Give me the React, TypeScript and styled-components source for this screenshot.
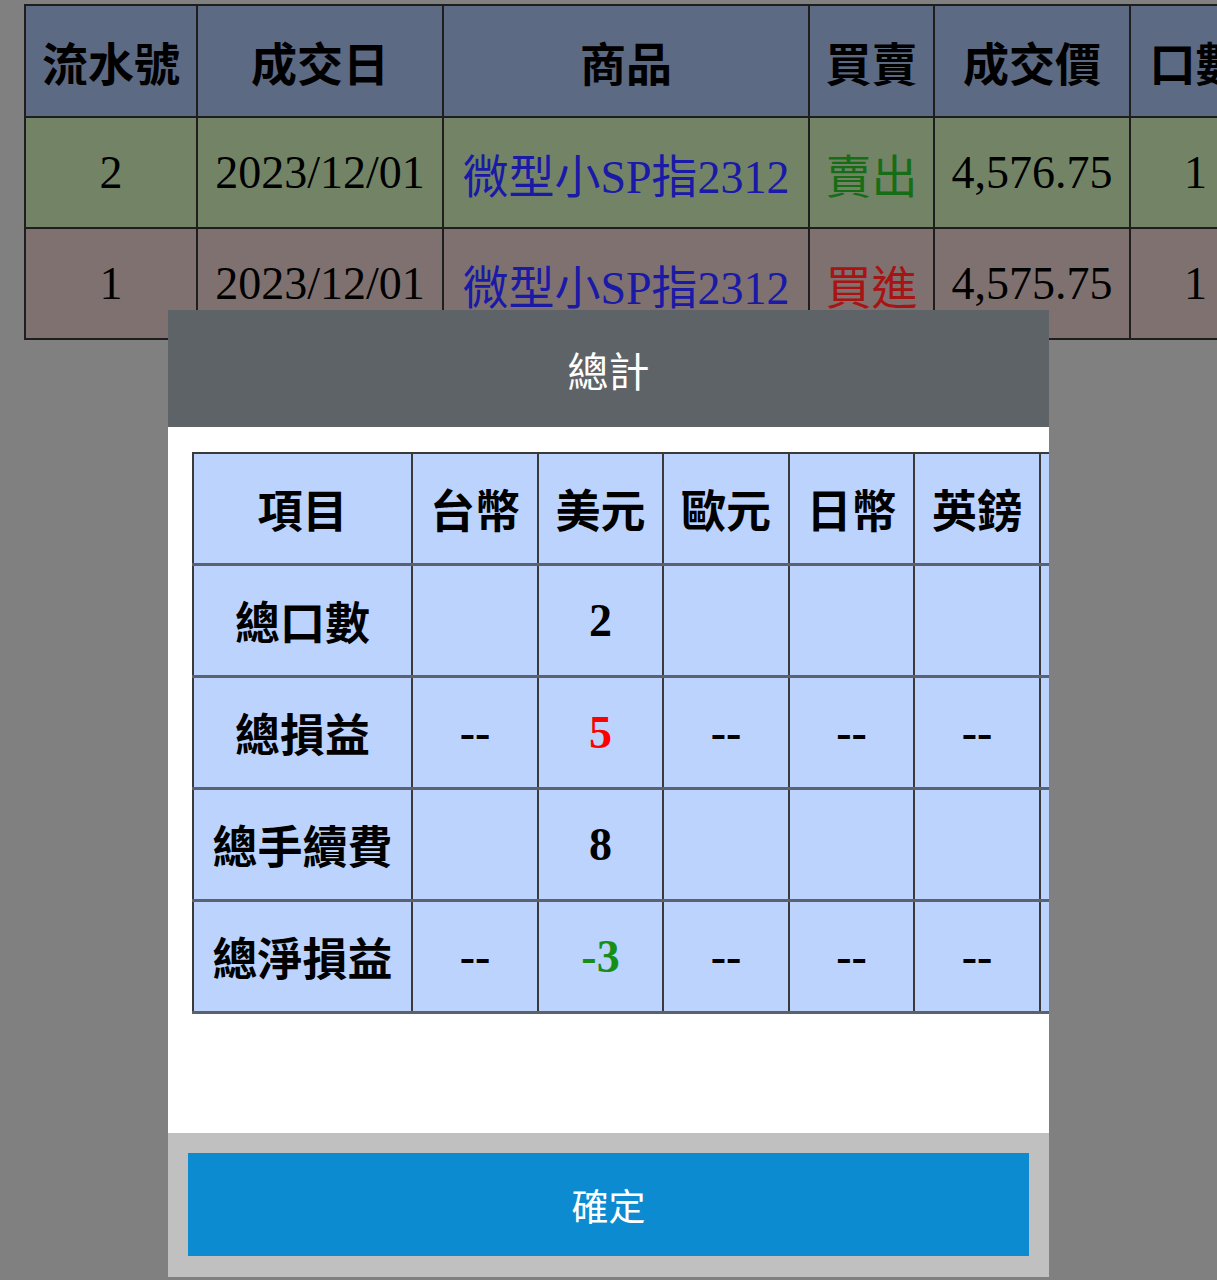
import React from 'react';
import styled, { createGlobalStyle } from 'styled-components';

const GlobalStyle = createGlobalStyle`
  html, body {
    margin: 0;
    padding: 0;
    overflow: hidden;
    background: #c5c5c5;
  }
`;

const SANS = `"Noto Sans CJK TC", "Noto Sans", sans-serif`;
const SERIF = `"Liberation Serif", "Noto Sans CJK TC", serif`;

const Page = styled.div`
  width: 1217px;
  height: 1280px;
  padding: 4px 0 0 24px;
  box-sizing: border-box;
  background: #c5c5c5;
  overflow: hidden;
`;

const TradeTable = styled.table`
  border-collapse: collapse;
  border: 2px solid #2e2e2e;
  table-layout: fixed;
  width: 1224px;
`;

const TradeHead = styled.th<{ $w: number }>`
  width: ${(p) => p.$w}px;
  height: 110px;
  padding: 0;
  background: #8fa3ca;
  border: 2px solid #2e2e2e;
  font-family: ${SANS};
  font-weight: 700;
  font-size: 46px;
  color: #000;
  white-space: nowrap;
  overflow: hidden;
  text-align: center;
`;

const TradeRow = styled.tr<{ $side: 'buy' | 'sell' }>`
  background: ${(p) => (p.$side === 'sell' ? '#b1cb9d' : '#c3aeac')};
`;

const TradeCell = styled.td<{ $tone?: 'blue' | 'green' | 'red' }>`
  height: 109px;
  padding: 0;
  border: 2px solid #2e2e2e;
  font-family: ${SERIF};
  font-size: 46px;
  text-align: center;
  white-space: nowrap;
  overflow: hidden;
  color: ${(p) =>
    p.$tone === 'blue' ? '#2828ff' : p.$tone === 'green' ? '#22a822' : p.$tone === 'red' ? '#ff2020' : '#000'};
`;

const Backdrop = styled.div`
  position: fixed;
  inset: 0;
  background: rgba(0, 0, 0, 0.35);
  display: flex;
  justify-content: center;
  align-items: flex-start;
  padding-top: 310px;
`;

const Dialog = styled.div`
  width: 881px;
  height: 967px;
  display: flex;
  flex-direction: column;
  background: #fff;
`;

const DialogHeader = styled.div`
  height: 117px;
  flex: none;
  background: #5e6367;
  color: #fff;
  display: flex;
  align-items: center;
  justify-content: center;
  font-family: ${SANS};
  font-size: 41px;
  font-weight: 400;
`;

const DialogBody = styled.div`
  flex: 1;
  padding: 25px 0 0 24px;
  overflow: hidden;
  background: #fff;
`;

const SumTable = styled.table`
  border-collapse: collapse;
  border: 2px solid #3a3a3a;
  table-layout: fixed;
  width: 960px;
`;

const SumHead = styled.th<{ $w: number }>`
  width: ${(p) => p.$w}px;
  height: 109px;
  padding: 0;
  background: #bcd3fd;
  border: 2px solid #3a3a3a;
  border-bottom: 3px solid #5c6170;
  font-family: ${SANS};
  font-weight: 700;
  font-size: 45px;
  white-space: nowrap;
  overflow: hidden;
  color: #000;
`;

const SumLabel = styled.th`
  height: 109px;
  padding: 0;
  background: #bcd3fd;
  border: 2px solid #3a3a3a;
  border-bottom: 3px solid #5c6170;
  font-family: ${SANS};
  font-weight: 700;
  font-size: 45px;
  white-space: nowrap;
  color: #000;
`;

const SumValue = styled.td<{ $tone?: 'up' | 'down' }>`
  height: 109px;
  padding: 0;
  background: #bcd3fd;
  border: 2px solid #3a3a3a;
  border-bottom: 3px solid #5c6170;
  text-align: center;
  font-family: ${SERIF};
  font-weight: 700;
  font-size: 46px;
  white-space: nowrap;
  overflow: hidden;
  color: ${(p) => (p.$tone === 'up' ? '#ff0000' : p.$tone === 'down' ? '#178f17' : '#000')};
`;

const DialogFooter = styled.div`
  height: 144px;
  flex: none;
  box-sizing: border-box;
  background: #c0c0c0;
  padding: 20px 20px 21px;
  display: flex;
`;

const ConfirmButton = styled.button`
  flex: 1;
  border: none;
  margin: 0;
  background: #0d8bd0;
  color: #fff;
  font-family: ${SANS};
  font-size: 37px;
  font-weight: 400;
  cursor: pointer;
`;

const trades = [
  { no: '2', date: '2023/12/01', product: '微型小SP指2312', side: 'sell' as const, price: '4,576.75', qty: '1' },
  { no: '1', date: '2023/12/01', product: '微型小SP指2312', side: 'buy' as const, price: '4,575.75', qty: '1' },
];

const tradeCols = [
  { title: '流水號', w: 170 },
  { title: '成交日', w: 244 },
  { title: '商品', w: 364 },
  { title: '買賣', w: 123 },
  { title: '成交價', w: 194 },
  { title: '口數', w: 129 },
];

const currencies = [
  { title: '項目', w: 217 },
  { title: '台幣', w: 124 },
  { title: '美元', w: 123 },
  { title: '歐元', w: 124 },
  { title: '日幣', w: 123 },
  { title: '英鎊', w: 124 },
  { title: '港幣', w: 125 },
];

type Tone = 'up' | 'down' | undefined;

const summary: { label: string; values: { v: string; tone?: Tone }[] }[] = [
  { label: '總口數', values: [{ v: '' }, { v: '2' }, { v: '' }, { v: '' }, { v: '' }, { v: '' }] },
  { label: '總損益', values: [{ v: '--' }, { v: '5', tone: 'up' }, { v: '--' }, { v: '--' }, { v: '--' }, { v: '--' }] },
  { label: '總手續費', values: [{ v: '' }, { v: '8' }, { v: '' }, { v: '' }, { v: '' }, { v: '' }] },
  { label: '總淨損益', values: [{ v: '--' }, { v: '-3', tone: 'down' }, { v: '--' }, { v: '--' }, { v: '--' }, { v: '--' }] },
];

const App: React.FC = () => {
  return (
    <Page>
      <GlobalStyle />
      <TradeTable>
        <thead>
          <tr>
            {tradeCols.map((c) => (
              <TradeHead key={c.title} $w={c.w}>
                {c.title}
              </TradeHead>
            ))}
          </tr>
        </thead>
        <tbody>
          {trades.map((t) => (
            <TradeRow key={t.no} $side={t.side}>
              <TradeCell>{t.no}</TradeCell>
              <TradeCell>{t.date}</TradeCell>
              <TradeCell $tone="blue">{t.product}</TradeCell>
              <TradeCell $tone={t.side === 'sell' ? 'green' : 'red'}>
                {t.side === 'sell' ? '賣出' : '買進'}
              </TradeCell>
              <TradeCell>{t.price}</TradeCell>
              <TradeCell>{t.qty}</TradeCell>
            </TradeRow>
          ))}
        </tbody>
      </TradeTable>

      <Backdrop>
        <Dialog>
          <DialogHeader>總計</DialogHeader>
          <DialogBody>
            <SumTable>
              <thead>
                <tr>
                  {currencies.map((c) => (
                    <SumHead key={c.title} $w={c.w}>
                      {c.title}
                    </SumHead>
                  ))}
                </tr>
              </thead>
              <tbody>
                {summary.map((row) => (
                  <tr key={row.label}>
                    <SumLabel>{row.label}</SumLabel>
                    {row.values.map((cell, i) => (
                      <SumValue key={i} $tone={cell.tone}>
                        {cell.v}
                      </SumValue>
                    ))}
                    <SumValue>{row.values[0].v}</SumValue>
                  </tr>
                ))}
              </tbody>
            </SumTable>
          </DialogBody>
          <DialogFooter>
            <ConfirmButton>確定</ConfirmButton>
          </DialogFooter>
        </Dialog>
      </Backdrop>
    </Page>
  );
};

export default App;
